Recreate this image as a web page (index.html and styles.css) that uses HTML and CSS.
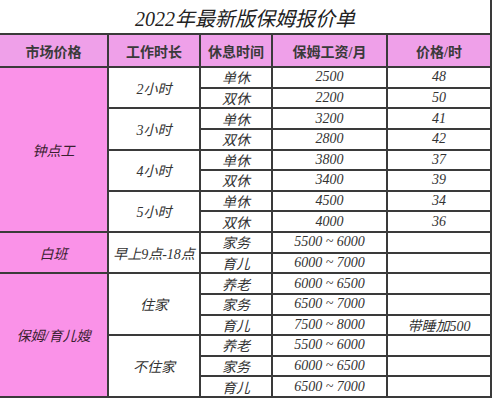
FILE: index.html
```html
<!DOCTYPE html>
<html lang="zh">
<head>
<meta charset="utf-8">
<title>2022年最新版保姆报价单</title>
<link rel="stylesheet" href="styles.css">
</head>
<body>
<div class="sheet">
  <h1 class="title">2022年最新版保姆报价单</h1>
  <div class="grid">
    <div class="hd">市场价格</div>
    <div class="hd">工作时长</div>
    <div class="hd">休息时间</div>
    <div class="hd">保姆工资/月</div>
    <div class="hd">价格/时</div>

    <div class="cat r8">钟点工</div>
    <div class="c r2">2小时</div>
    <div class="c">单休</div><div class="c">2500</div><div class="c">48</div>
    <div class="c">双休</div><div class="c">2200</div><div class="c">50</div>
    <div class="c r2">3小时</div>
    <div class="c">单休</div><div class="c">3200</div><div class="c">41</div>
    <div class="c">双休</div><div class="c">2800</div><div class="c">42</div>
    <div class="c r2">4小时</div>
    <div class="c">单休</div><div class="c">3800</div><div class="c">37</div>
    <div class="c">双休</div><div class="c">3400</div><div class="c">39</div>
    <div class="c r2">5小时</div>
    <div class="c">单休</div><div class="c">4500</div><div class="c">34</div>
    <div class="c">双休</div><div class="c">4000</div><div class="c">36</div>

    <div class="cat r2">白班</div>
    <div class="c r2">早上9点-18点</div>
    <div class="c">家务</div><div class="c">5500 ~ 6000</div><div class="c"></div>
    <div class="c">育儿</div><div class="c">6000 ~ 7000</div><div class="c"></div>

    <div class="cat r6">保姆/育儿嫂</div>
    <div class="c r3">住家</div>
    <div class="c">养老</div><div class="c">6000 ~ 6500</div><div class="c"></div>
    <div class="c">家务</div><div class="c">6500 ~ 7000</div><div class="c"></div>
    <div class="c">育儿</div><div class="c">7500 ~ 8000</div><div class="c">带睡加500</div>
    <div class="c r3">不住家</div>
    <div class="c">养老</div><div class="c">5500 ~ 6000</div><div class="c"></div>
    <div class="c">家务</div><div class="c">6000 ~ 6500</div><div class="c"></div>
    <div class="c">育儿</div><div class="c">6500 ~ 7000</div><div class="c"></div>
  </div>
</div>
</body>
</html>
```

FILE: styles.css
```css
html, body {
  margin: 0;
  padding: 0;
  background: #fff;
}

.sheet {
  width: 492px;
  font-family: "Liberation Serif", "Noto Sans CJK SC", serif;
  color: #333;
}

.title {
  margin: 0;
  height: 33px;
  box-sizing: border-box;
  border-right: 2px solid #3a3a3a;
  display: flex;
  align-items: center;
  justify-content: center;
  font-size: 20px;
  font-weight: normal;
  font-style: italic;
  color: #222;
  padding-top: 2px;
}

.grid {
  display: grid;
  grid-template-columns: 107px 90px 70px 113px 102px;
  grid-template-rows: 31px repeat(16, 18.625px);
  gap: 2px;
  background: #3a3a3a;
  border-top: 2px solid #3a3a3a;
  border-right: 2px solid #3a3a3a;
  border-bottom: 2px solid #3a3a3a;
}

.grid > div {
  display: flex;
  align-items: center;
  justify-content: center;
  background: #fff;
  font-size: 14px;
  white-space: nowrap;
}

.hd {
  background: #efa0e9 !important;
  font-weight: bold;
  color: #3a3a3a;
  font-size: 14px;
}

.c {
  font-style: italic;
}

.cat {
  background: #fa92e8 !important;
  font-style: italic;
  font-size: 15px;
  color: #3a2030;
}

.r2 { grid-row: span 2; }
.r3 { grid-row: span 3; }
.r6 { grid-row: span 6; }
.r8 { grid-row: span 8; }
```
